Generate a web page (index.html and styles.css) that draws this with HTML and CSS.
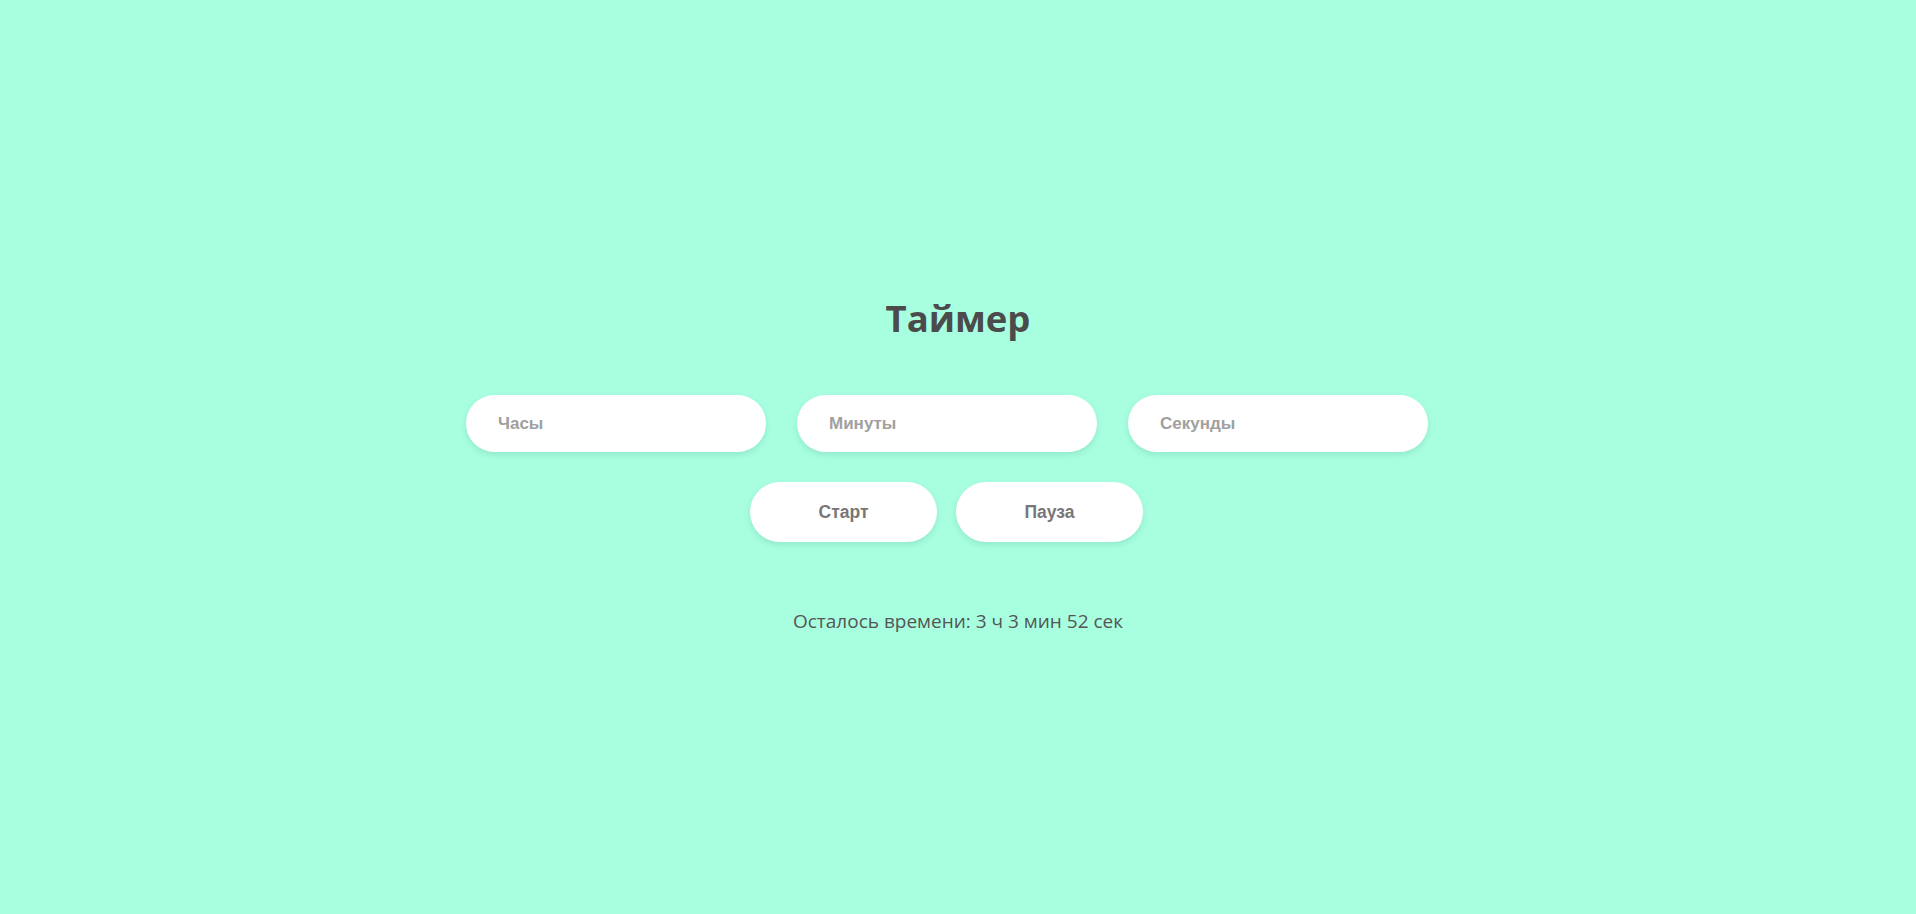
FILE: index.html
```html
<!DOCTYPE html>
<html lang="ru">
<head>
<meta charset="utf-8">
<title>Таймер</title>
<link rel="stylesheet" href="styles.css">
</head>
<body>
<main class="timer">
  <h1 class="timer-title">Таймер</h1>
  <div class="inputs">
    <input class="field" type="number" placeholder="Часы">
    <input class="field" type="number" placeholder="Минуты">
    <input class="field" type="number" placeholder="Секунды">
  </div>
  <div class="buttons">
    <button class="btn">Старт</button>
    <button class="btn">Пауза</button>
  </div>
  <p class="remaining">Осталось времени: 3 ч 3 мин 52 сек</p>
</main>
</body>
</html>
```
FILE: styles.css
```css
html, body {
  margin: 0;
  padding: 0;
  height: 100%;
}
body {
  background: #a7ffe0;
  font-family: "Open Sans", "Noto Sans", sans-serif;
}
.timer {
  display: flex;
  flex-direction: column;
  align-items: stretch;
  padding-top: 290px;
}
.timer-title {
  margin: 0;
  text-align: center;
  font-size: 36.5px;
  font-weight: 700;
  color: #4b4b4b;
  line-height: 56px;
}
.inputs {
  display: flex;
  justify-content: center;
  gap: 31px;
  padding-right: 22px;
  margin-top: 49px;
}
.field {
  width: 300px;
  height: 57px;
  box-sizing: border-box;
  border: none;
  border-radius: 30px;
  background: #fff;
  padding: 0 0 0 32px;
  font-family: "Liberation Sans", Arial, sans-serif;
  font-weight: 700;
  font-size: 17px;
  color: #555;
  outline: none;
  box-shadow: 0 3px 6px rgba(0, 80, 60, 0.12);
  -moz-appearance: textfield;
}
.field::placeholder {
  color: #a0a0a0;
}
.field::-webkit-outer-spin-button,
.field::-webkit-inner-spin-button {
  -webkit-appearance: none;
  margin: 0;
}
.buttons {
  display: flex;
  justify-content: center;
  gap: 19px;
  padding-right: 23px;
  margin-top: 30px;
}
.btn {
  width: 187px;
  height: 60px;
  border: none;
  border-radius: 30px;
  background: #fff;
  font-family: "Liberation Sans", Arial, sans-serif;
  font-weight: 700;
  font-size: 17.5px;
  color: #777;
  cursor: pointer;
  box-shadow: 0 3px 6px rgba(0, 80, 60, 0.12);
}
.remaining {
  margin: 66px 0 0;
  text-align: center;
  font-size: 19px;
  line-height: 26px;
  color: #555;
}
```
